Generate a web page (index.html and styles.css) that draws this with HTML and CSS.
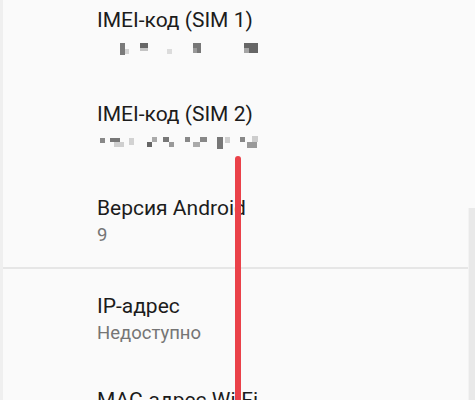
FILE: index.html
```html
<!DOCTYPE html>
<html lang="ru">
<head>
    <meta charset="UTF-8">
    <title>О телефоне</title>
    <link rel="stylesheet" href="styles.css">
</head>
<body>
    <div class="screen">
        <div class="list">
            <div class="item first">
                <div class="title">IMEI-код (SIM 1)</div>
                <div class="summary">
                    <!-- номер скрыт мозаикой -->
                    <svg class="mosaic" width="165" height="14" viewBox="0 0 165 14">
                        <rect x="23" y="1" width="5" height="12" fill="#7a7a7a"/>
                        <rect x="28" y="7" width="4" height="5" fill="#d4d4d4"/>
                        <rect x="43" y="1" width="8" height="5" fill="#666"/>
                        <rect x="43" y="6" width="8" height="3" fill="#c4c4c4"/>
                        <rect x="70" y="7" width="5" height="5" fill="#dcdcdc"/>
                        <rect x="96" y="1" width="8" height="10" fill="#777"/>
                        <rect x="96" y="6" width="4" height="5" fill="#999"/>
                        <rect x="147" y="1" width="14" height="10" fill="#666"/>
                        <rect x="147" y="6" width="5" height="5" fill="#a5a5a5"/>
                    </svg>
                </div>
            </div>
            <div class="item">
                <div class="title">IMEI-код (SIM 2)</div>
                <div class="summary">
                    <svg class="mosaic" width="165" height="14" viewBox="0 0 165 14">
                        <rect x="3" y="2" width="5" height="5" fill="#888"/>
                        <rect x="13" y="2" width="10" height="4" fill="#777"/>
                        <rect x="17" y="6" width="10" height="5" fill="#cfcfcf"/>
                        <rect x="32" y="2" width="5" height="7" fill="#d2d2d2"/>
                        <rect x="50" y="6" width="5" height="5" fill="#666"/>
                        <rect x="55" y="1" width="5" height="5" fill="#aaa"/>
                        <rect x="66" y="1" width="6" height="5" fill="#777"/>
                        <rect x="72" y="6" width="5" height="5" fill="#999"/>
                        <rect x="88" y="1" width="5" height="5" fill="#888"/>
                        <rect x="96" y="6" width="7" height="5" fill="#aaa"/>
                        <rect x="103" y="1" width="7" height="5" fill="#888"/>
                        <rect x="120" y="1" width="6" height="12" fill="#777"/>
                        <rect x="128" y="1" width="5" height="6" fill="#cfcfcf"/>
                        <rect x="143" y="1" width="5" height="5" fill="#888"/>
                        <rect x="150" y="6" width="10" height="6" fill="#999"/>
                        <rect x="155" y="0" width="6" height="6" fill="#cdcdcd"/>
                    </svg>
                </div>
            </div>
            <div class="item">
                <div class="title">Версия Android</div>
                <div class="summary">9</div>
            </div>
        </div>
        <div class="divider"></div>
        <div class="list next">
            <div class="item">
                <div class="title">IP-адрес</div>
                <div class="summary">Недоступно</div>
            </div>
            <div class="item">
                <div class="title">MAC-адрес Wi-Fi</div>
                <div class="summary">Недоступно</div>
            </div>
        </div>

        <div class="scrollbar"></div>
        <div class="marker"></div>
    </div>
</body>
</html>
```

FILE: styles.css
```css
body {
    margin: 0;
    background: #fafafa;
    font-family: Roboto, "Noto Sans", sans-serif;
}

.screen {
    position: relative;
    height: 400px;
    overflow: hidden;
    border-left: 3px solid #efefef;
}

.list {
    display: flex;
    flex-direction: column;
}

.item.first {
    margin-top: -15px;
}

.list.next {
    padding-top: 2px;
}

.item {
    padding: 21px 20px 19px 94px;
}

.title {
    font-size: 21px;
    line-height: 28px;
    color: #1c1c1c;
}

.summary {
    font-size: 18.5px;
    line-height: 26px;
    color: #757575;
    height: 26px;
}

.mosaic {
    display: block;
    padding-top: 8px;
}

.divider {
    height: 2px;
    background: #e6e6e6;
}

.scrollbar {
    position: absolute;
    top: 208px;
    right: 0;
    bottom: 0;
    width: 6px;
    background: #e9e9e9;
    border-left: 1px solid #f3f3f3;
}

/* красная пометка поверх скриншота */
.marker {
    position: absolute;
    top: 156px;
    left: 232px;
    width: 6px;
    bottom: 0;
    background: #ea4149;
    border-radius: 3px 3px 0 0;
}
```
